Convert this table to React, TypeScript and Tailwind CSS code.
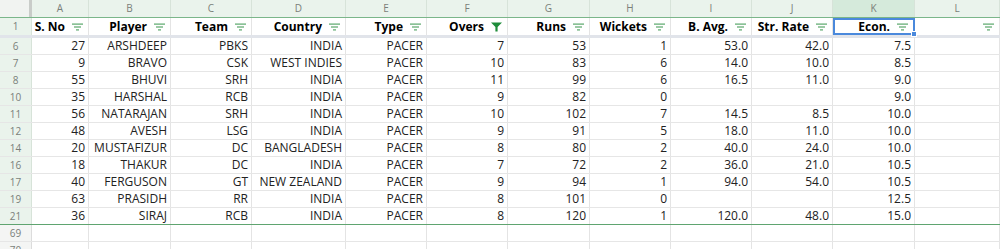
import React from "react";

const cols = [57, 82, 81, 94, 81, 81, 82, 81, 81, 81, 82, 85];
const letters = ["A", "B", "C", "D", "E", "F", "G", "H", "I", "J", "K", "L"];
const heads = ["S. No", "Player", "Team", "Country", "Type", "Overs", "Runs", "Wickets", "B. Avg.", "Str. Rate", "Econ.", ""];

const rows: [number, string[]][] = [
  [6, ["27", "ARSHDEEP", "PBKS", "INDIA", "PACER", "7", "53", "1", "53.0", "42.0", "7.5", ""]],
  [7, ["9", "BRAVO", "CSK", "WEST INDIES", "PACER", "10", "83", "6", "14.0", "10.0", "8.5", ""]],
  [8, ["55", "BHUVI", "SRH", "INDIA", "PACER", "11", "99", "6", "16.5", "11.0", "9.0", ""]],
  [10, ["35", "HARSHAL", "RCB", "INDIA", "PACER", "9", "82", "0", "", "", "9.0", ""]],
  [11, ["56", "NATARAJAN", "SRH", "INDIA", "PACER", "10", "102", "7", "14.5", "8.5", "10.0", ""]],
  [12, ["48", "AVESH", "LSG", "INDIA", "PACER", "9", "91", "5", "18.0", "11.0", "10.0", ""]],
  [14, ["20", "MUSTAFIZUR", "DC", "BANGLADESH", "PACER", "8", "80", "2", "40.0", "24.0", "10.0", ""]],
  [16, ["18", "THAKUR", "DC", "INDIA", "PACER", "7", "72", "2", "36.0", "21.0", "10.5", ""]],
  [17, ["40", "FERGUSON", "GT", "NEW ZEALAND", "PACER", "9", "94", "1", "94.0", "54.0", "10.5", ""]],
  [19, ["63", "PRASIDH", "RR", "INDIA", "PACER", "8", "101", "0", "", "", "12.5", ""]],
  [21, ["36", "SIRAJ", "RCB", "INDIA", "PACER", "8", "120", "1", "120.0", "48.0", "15.0", ""]],
];

const gridCols = "grid grid-cols-[32px_57px_82px_81px_94px_81px_81px_82px_81px_81px_81px_82px_85px]";

function FilterIcon() {
  return (
    <svg width="11" height="8" viewBox="0 0 11 8" className="shrink-0">
      <rect x="0" y="0.5" width="11" height="1.2" fill="#5ba86c" />
      <rect x="2" y="3.4" width="7" height="1.2" fill="#5ba86c" />
      <rect x="4" y="6.3" width="3" height="1.2" fill="#5ba86c" />
    </svg>
  );
}

function FunnelIcon() {
  return (
    <svg width="11" height="10" viewBox="0 0 11 10" className="shrink-0">
      <path d="M0 0.5 H11 L6.6 5 V9.5 H4.4 V5 Z" fill="#1e8c3a" />
    </svg>
  );
}

export default function App() {
  return (
    <div
      className="w-[1000px] h-[249px] overflow-hidden bg-white text-[12px] text-[#222]"
      style={{ fontFamily: '"Open Sans", "Liberation Sans", sans-serif' }}
    >
      {/* column letters */}
      <div className={`${gridCols} h-[18px] border-b border-[#7bb68a]`}>
        <div className="bg-[#f1f3f1] border-r-[3px] border-[#c9ccc9]" />
        {letters.map((l, i) => (
          <div
            key={l}
            className={`flex items-center justify-center border-r border-[#d7e3d9] text-[10px] text-[#7a7f7a] ${
              i === 10 ? "bg-[#d5eadb]" : "bg-[#eaf3ec]"
            }`}
          >
            {l}
          </div>
        ))}
      </div>
      {/* header row 1 */}
      <div className={`${gridCols} h-[17px]`}>
        <div className="flex items-center justify-center bg-[#eaf3ec] border-r border-[#d7e3d9] text-[10px] text-[#7a7f7a]">
          1
        </div>
        {heads.map((h, i) => (
          <div
            key={i}
            className={`relative flex items-center justify-end gap-[7px] pr-[5px] font-bold text-[12px] text-black whitespace-nowrap ${
              i === 10 ? "border-2 border-[#4a89dc] pr-[4px]" : "border-r border-[#e4e4e4]"
            }`}
          >
            {h && <span className="leading-none">{h}</span>}
            {i === 5 ? <FunnelIcon /> : <FilterIcon />}
            {i === 10 && (
              <div className="absolute right-[-4px] bottom-[-4px] w-[6px] h-[6px] bg-[#4a89dc] border border-white z-10" />
            )}
          </div>
        ))}
      </div>
      {/* frozen separator */}
      <div className="h-[3px] bg-[#e1e4ea]" />
      {/* data rows */}
      {rows.map(([n, cells], ri) => (
        <div
          key={n}
          className={`${gridCols} h-[17px] border-b ${
            ri === rows.length - 1 ? "border-[#5fa470]" : "border-[#e6e6e6]"
          }`}
        >
          <div className="flex items-center justify-center bg-[#eaf3ec] border-r border-[#d7e3d9] text-[10px] text-[#7a7f7a]">
            {n}
          </div>
          {cells.map((c, i) => (
            <div
              key={i}
              className="flex items-center justify-end pr-[3px] border-r border-[#e4e4e4] leading-none text-[#222] whitespace-nowrap"
            >
              {c}
            </div>
          ))}
        </div>
      ))}
      {[69, 70].map((n) => (
        <div key={n} className={`${gridCols} h-[17px] border-b border-[#e6e6e6]`}>
          <div className="flex items-center justify-center bg-[#f4f5f4] border-r border-[#dcdcdc] text-[10px] text-[#7a7f7a]">
            {n}
          </div>
          {cols.map((_, i) => (
            <div key={i} className="border-r border-[#e4e4e4]" />
          ))}
        </div>
      ))}
    </div>
  );
}
